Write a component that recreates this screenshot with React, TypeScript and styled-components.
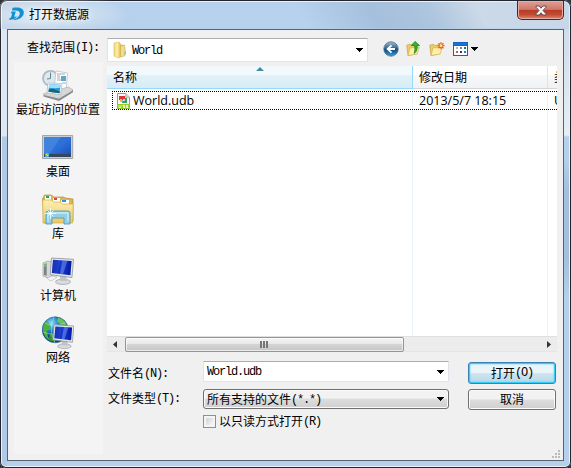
import React from "react";
import styled, { createGlobalStyle } from "styled-components";

const GlobalStyle = createGlobalStyle`
  * { box-sizing: border-box; }
  body { margin: 0; background: #30333a; overflow: hidden; }
`;

const sans = `"Open Sans", "Noto Sans CJK SC", sans-serif`;

const Window = styled.div`
  width: 571px;
  height: 468px;
  display: flex;
  flex-direction: column;
  border-radius: 7px 7px 6px 6px;
  overflow: hidden;
  color: #000;
  font: 12px/16px ${sans};
  white-space: nowrap;
  box-shadow: inset 0 0 0 1px #24262e, inset 0 0 0 2px #e8f1fb;
  background:
    linear-gradient(to bottom, #dce7f3 0 107px, #b0c9e6 108px 100%) left 29px / 7px 439px no-repeat,
    linear-gradient(to bottom, #cfdcea 0, #e6eef6 106px, #b5d0ec 108px 130px, #a5c0de 160px 230px, #b5d0ec 270px 100%) right 29px / 7px 439px no-repeat,
    linear-gradient(to bottom, transparent 28px, #b5d0ec 29px),
    linear-gradient(62deg, #dfe8f2 0, #ccdaeb 14%, #bccfe5 25%, #a9c5e1 36%, #b6d1ec 43%, #b7d2ec 66%, #a5c0dc 75%, #adc5de 82%, #cbd9e8 88%, #c6d7e9 100%);
`;

const TitleBar = styled.header`
  height: 29px;
  flex: none;
  display: flex;
  align-items: flex-start;
  padding: 1px 7px 0 9px;
  background: radial-gradient(ellipse 85px 24px at 45px 15px, rgba(255,255,255,.75), transparent);
`;

const TitleLogo = styled.span`
  padding-top: 6px;
  line-height: 0;
`;

const TitleText = styled.h1`
  margin: 5px 0 0 5px;
  flex: 1;
  font: 12px/18px ${sans};
  text-shadow: 0 0 6px #fff;
`;

const CloseButton = styled.button`
  width: 47px;
  height: 19px;
  padding: 0;
  display: flex;
  justify-content: center;
  align-items: center;
  border: 1px solid #591f20;
  border-top: 0;
  border-radius: 0 0 5px 5px;
  box-shadow: inset 0 0 0 1px #e9aaa0;
  background: linear-gradient(#dca197 0, #cf7768 47%, #b73b28 50%, #c14b32 75%, #dc8869 100%);
`;

const Client = styled.main`
  margin: 0 7px 7px;
  height: 432px;
  border: 1px solid #58636e;
  background: #f0f0f0;
  display: grid;
  grid-template-columns: 99px 450px;
`;

const Left = styled.section`
  display: flex;
  flex-direction: column;
`;

const Label = styled.label`
  font: 12px/16px "Noto Sans CJK SC", sans-serif;
  display: flex;
  align-items: center;
`;

const LookIn = styled(Label)`
  height: 32px;
  padding: 2px 0 0 19px;
`;

const FieldLabel = styled(Label)<{ $lift: number }>`
  padding-bottom: ${(p) => p.$lift}px;
`;

const Latin = styled.span`
  padding-top: 1px;
  font: 12px/16px "Liberation Mono", monospace;
  letter-spacing: -1.2px;
`;

const Places = styled.nav`
  margin-left: 6px;
  width: 89px;
  height: 392px;
  padding: 6px 1px 0 0;
  background: #f4f4f4;
`;

const Place = styled.a`
  height: 62px;
  display: flex;
  flex-direction: column;
  align-items: center;
  svg { display: block; flex: none; }
`;

const PlaceName = styled.span`
  height: 17px;
  line-height: 17px;
  margin-top: -1px;
`;

const Right = styled.section`
  display: flex;
  flex-direction: column;
`;

const Toolbar = styled.div`
  height: 36px;
  padding-top: 8px;
  display: flex;
`;

const Combo = styled.div<{ $w: number; $h: number; $button?: boolean }>`
  width: ${(p) => p.$w}px;
  height: ${(p) => p.$h}px;
  flex: none;
  display: flex;
  align-items: center;
  padding: 0 4px 0 3px;
  border: 1px solid ${(p) => (p.$button ? "#707070" : "#e2e3ea")};
  border-top-color: ${(p) => (p.$button ? "#707070" : "#abadb3")};
  border-radius: ${(p) => (p.$button ? 3 : 1)}px;
  background: ${(p) => (p.$button ? "linear-gradient(#f2f2f2 0 45%, #dddddd 50%, #cfcfcf)" : "#fff")};
  box-shadow: ${(p) => (p.$button ? "inset 0 0 0 1px #fafafa" : "none")};
`;

const ComboText = styled.span`
  flex: 1;
  display: flex;
  align-items: center;
  font-family: "Noto Sans CJK SC", sans-serif;
`;

const LocationIcon = styled.span`
  display: flex;
  margin: 0 4px 0 1px;
`;

const Tools = styled.div`
  display: flex;
  align-items: flex-start;
  padding: 3px 0 0 15px;
  gap: 7px;
  svg { display: block; }
`;

const ViewTool = styled.span`
  display: flex;
  align-items: center;
  gap: 3px;
  padding: 1px 0 0 1px;
`;

const List = styled.div`
  height: 270px;
  flex: none;
  display: grid;
  grid-template-columns: 306px 135px 9px;
  grid-template-rows: 23px 2px 19px 226px;
  background:
    linear-gradient(#e8f2fc, #e8f2fc) 305px 0 / 1px 100% no-repeat,
    linear-gradient(#e8f2fc, #e8f2fc) 440px 0 / 1px 100% no-repeat, #fff;
`;

const HeaderCell = styled.div<{ $sorted?: boolean }>`
  position: relative;
  padding: 3px 0 0 6px;
  overflow: hidden;
  line-height: 17px;
  border-right: 1px solid ${(p) => (p.$sorted ? "#96d9f9" : "#dfe3e8")};
  border-bottom: 1px solid ${(p) => (p.$sorted ? "#96d9f9" : "#d5d5d5")};
  background: ${(p) => (p.$sorted ? "linear-gradient(#f2f9fc 0 9px, #e1f1f9 9px, #d8ecf6)" : "linear-gradient(#fff 0 9px, #f7f8fa 9px, #f1f2f4)")};
  &:nth-child(3) { border-right: 0; }
`;

const SortMark = styled.svg`
  position: absolute;
  left: 149px;
  top: 1px;
`;

const FileRow = styled.div`
  grid-row: 3;
  grid-column: 1 / -1;
  height: 19px;
  margin-left: 5px;
  display: grid;
  grid-template-columns: 301px 135px 9px;
  align-items: center;
  background:
    repeating-linear-gradient(90deg, #000 0 1px, transparent 1px 2px) top / 100% 1px no-repeat,
    repeating-linear-gradient(90deg, #000 0 1px, transparent 1px 2px) bottom / 100% 1px no-repeat,
    repeating-linear-gradient(#000 0 1px, transparent 1px 2px) left / 1px 100% no-repeat;
`;

const FileCell = styled.div`
  display: flex;
  align-items: center;
  gap: 3px;
  overflow: hidden;
  padding-left: 6px;
  font-size: 12.5px;
  &:first-child { padding-left: 5px; }
`;

const ScrollBar = styled.div`
  height: 16px;
  flex: none;
  display: flex;
  align-items: center;
  justify-content: space-between;
  padding: 0 6px;
  background: #ececec;
  border-top: 1px solid #e0e0e0;
  border-bottom: 1px solid #e5e5e5;
  svg { flex: none; }
`;

const Thumb = styled.div`
  width: 279px;
  height: 15px;
  margin: 0 auto 0 8px;
  display: flex;
  justify-content: center;
  align-items: center;
  border: 1px solid #959595;
  border-radius: 2px;
  background: linear-gradient(#f5f5f5 0, #e8e8ea 46%, #d4d4d6 50%, #c6c6c8);
  box-shadow: inset 0 0 0 1px rgba(255,255,255,.6);
`;

const Form = styled.form`
  padding: 9px 1px 0 1px;
  display: grid;
  grid-template-columns: 95px 265px 88px;
  grid-template-rows: 28px 26px 20px;
`;

const Button = styled.button<{ $primary?: boolean }>`
  width: 88px;
  height: ${(p) => (p.$primary ? 22 : 21)}px;
  margin: ${(p) => (p.$primary ? 1 : 0)}px 0 0;
  padding: 0 0 1px;
  display: flex;
  justify-content: center;
  align-items: center;
  font: 12px/16px "Noto Sans CJK SC", sans-serif;
  color: #000;
  border: 1px solid ${(p) => (p.$primary ? "#3c7fb1" : "#707070")};
  border-radius: 3px;
  box-shadow: ${(p) => (p.$primary ? "inset 0 0 0 1px #34cdf8, inset 0 0 2px 1px #48d8fb" : "inset 0 0 0 1px #fbfbfb")};
  background: ${(p) => (p.$primary ? "linear-gradient(#eaf4f9 0 48%, #cfe5f1 52%, #b8d8e8)" : "linear-gradient(#f2f2f2 0 48%, #dddddd 52%, #cfcfcf)")};
`;

const CheckRow = styled(Label)`
  grid-column: 2;
  height: 16px;
  margin-top: -2px;
`;

const CheckBox = styled.span`
  width: 13px;
  height: 13px;
  margin-right: 3px;
  border: 1px solid #8e8f8f;
  background: linear-gradient(135deg, #cfd4d9, #f6f6f6) content-box, #f4f4f4;
  padding: 2px;
`;

const Grip = styled.svg`
  position: absolute;
  left: 552px;
  top: 450px;
`;

const Gradients = styled.svg`
  position: absolute;
  width: 0;
  height: 0;
`;

const Arrow = () => (
  <svg width="7" height="4" shapeRendering="crispEdges"><path d="M0 0h7v1H6v1H5v1H4v1H3V3H2V2H1V1H0z" /></svg>
);

const Logo = () => (
  <svg width="15" height="14" viewBox="0 0 15 14">
    <path d="M3.6.8C10.5-.6 15.2 1.6 14.8 6 14.4 10.6 9 13.4 3.6 13c4-1.300 7-3.400 7.200-6.700C10.900 4 8.800 3.300 3 3.400z" fill="#1191d2" />
    <path d="M2.500 4.600h4.300L5.200 9.800c1 .1 1.800-.1 2.800-.8-1.200 2.700-3.600 4-8 3.800l.6-1.900c.9 0 1.300-.3 1.600-1.200l1-3.200H2z" fill="#1191d2" />
  </svg>
);

const FolderIcon = () => (
  <svg width="16" height="18" viewBox="0 0 16 18">
    <defs><linearGradient id="fold"><stop stopColor="#efd777" /><stop offset=".5" stopColor="#fff0a9" /><stop offset="1" stopColor="#d9b84c" /></linearGradient></defs>
    <path d="M5 3l7 1v10l-5 1z" fill="#d9bd5a" />
    <path d="M2 2l5-1 1.500 2v13l-2 1-4.500-2z" fill="url(#fold)" stroke="#d9bd60" strokeWidth=".6" />
    <path d="M8.500 5l4-1 1 8-1 3-4 1z" fill="#f3dc86" stroke="#cdac4b" strokeWidth=".6" />
    <path d="M13 10.500v3.200" stroke="#62aee0" />
  </svg>
);

const BackIcon = () => (
  <svg width="16" height="16" viewBox="0 0 16 16">
    <defs><linearGradient id="back" x2="0" y2="1"><stop stopColor="#a8bdcd" /><stop offset=".45" stopColor="#2c6695" /><stop offset=".55" stopColor="#114a80" /><stop offset="1" stopColor="#35a5e2" /></linearGradient></defs>
    <circle cx="8" cy="8" r="7.2" fill="url(#back)" stroke="#4d6f89" strokeWidth=".8" />
    <path d="M8.500 4.300L4.600 8l3.900 3.700M4.800 8H12" fill="none" stroke="#fff" strokeWidth="1.8" />
  </svg>
);

const OpenFolder = () => (
  <>
    <path d="M.7 4.200l4-.9 1 1.200 5-.7v8.700L2 14.600z" fill="#eccb67" stroke="#c9a441" strokeWidth=".7" />
    <path d="M2 14.600L4 7l9.300-1-2.200 7z" fill="#fff0a6" stroke="#d3b24f" strokeWidth=".7" />
  </>
);

const UpIcon = () => (
  <svg width="16" height="16" viewBox="0 0 16 16">
    <OpenFolder />
    <path d="M9 .5l4.500 4h-2.400c.4 3.700-.4 6.500-3 7.900 1-2.600 1-5 .5-7.900H5.300z" fill="#37b529" stroke="#16801b" strokeWidth=".8" />
  </svg>
);

const NewFolderIcon = () => (
  <svg width="16" height="16" viewBox="0 0 16 16">
    <OpenFolder />
    <path d="M12 1.200v7M8.500 4.700h7M9.500 2.200l5 5M14.500 2.200l-5 5" stroke="#ef5a27" strokeWidth="1.3" />
    <circle cx="12" cy="4.700" r="1.4" fill="#fff07a" />
  </svg>
);

const ViewIcon = () => (
  <svg width="15" height="14" shapeRendering="crispEdges">
    <path fill="#1760c4" d="M0 0h15v14H0z" /><path fill="#1674dc" d="M1 1h13v2H1z" /><path fill="#fff" d="M1 4h13v9H1z" />
    <path fill="#b0b8c2" d="M3 5h2v2H3z" /><path fill="#78849a" d="M7 5h2v2H7z" /><path fill="#168849" d="M11 5h2v2h-2z" />
    <path fill="#e2551e" d="M3 9h2v2H3z" /><path fill="#213c79" d="M7 9h2v2H7z" /><path fill="#2771dd" d="M11 9h2v2h-2z" />
  </svg>
);

const FileIcon = () => (
  <svg width="13" height="16" viewBox="0 0 13 16">
    <path d="M.5.5h8.300l3.700 3.700v11.300H.5z" fill="#fafafa" stroke="#969696" />
    <path d="M8.800.5v3.700h3.700" fill="#ddd" stroke="#aaa" />
    <path d="M2 3h5v4H2z" fill="#e03331" /><path d="M6 5h4v5H5z" fill="#3a9c56" /><path d="M5 3h3v4H5z" fill="#e03331" /><path d="M6 6h2v2H6z" fill="#b6e2e6" /><path d="M3 6h2v3H3z" fill="#f4ba42" />
    <path d="M0 11h13v5H0z" fill="#8cc71d" />
    <path d="M2 12v2.500h2V12M8 12.300H6v1h2v1.200H6M11.500 12.300h-2v2.200h2M9.500 13.400h1.500" stroke="#fff" strokeWidth=".8" fill="none" />
  </svg>
);

const Monitor = () => (
  <>
    <ellipse cx="21" cy="25.800" rx="7.5" ry="2.6" fill="#dadddf" stroke="#959b9f" strokeWidth=".7" />
    <path d="M18 20h6l1 5h-7z" fill="#bfc4c8" />
    <path d="M9.500 2l22 1.300-1.600 18.200L8.200 18.700z" fill="#e6e9e8" stroke="#888f94" strokeWidth=".8" />
    <path d="M11 3.800l18.600 1.100-1.200 14.400L9.800 17z" fill="url(#screen)" />
    <path d="M11 3.800l7.500.5-2.700 13.300-6-.7z" fill="#76a2ff" opacity=".12" />
    <path d="M20.500 4.400l5 .3-4.500 13.600-3-.5z" fill="#9bb9ff" opacity=".4" />
  </>
);

const RecentIcon = () => (
  <svg width="32" height="34" viewBox="0 0 32 34">
    <circle cx="8.5" cy="10.300" r="7.5" fill="#dce9ef" stroke="#aebbc2" strokeWidth="1.8" />
    <path d="M8.500 4.500v6L5 11" fill="none" stroke="#698491" />
    <path d="M14 3l11.500 2L24 24l-12-2z" fill="#fff" stroke="#bec3c6" strokeWidth=".8" />
    <path d="M15 6h8M15 8h3M15 10h3M15 12h4M20 15h4" stroke="#91989c" strokeWidth=".8" />
    <path d="M19 8h5v5h-5z" fill="#63a5c9" />
    <path d="M1.500 26l5-2 20-5 4.500 3L17 31z" fill="#d5d7d8" stroke="#a5a9ac" strokeWidth=".6" />
    <path d="M6 15l14 .6-1.500 11L5 24.800z" fill="#fff" stroke="#a5adb2" strokeWidth=".6" />
    <path d="M7.200 16.200l11.500.5-1.300 8.500-11-1.400z" fill="#2e96dc" />
    <path d="M7.200 16.200l11.500.5-.5 3-5.200.6-6.300-.6z" fill="#9de0fc" />
    <path d="M6.800 21.500l4.200-.8 7 2.700-.5 1.800-11-1.400z" fill="#146b6a" />
    <path d="M1.500 26L17 29.700 31 21.500v2.800L17 33 1.500 28.600z" fill="#888c8e" />
    <path d="M2 26.500l15 3.600 13.500-8" fill="none" stroke="#ededed" strokeWidth=".8" />
  </svg>
);

const DesktopIcon = () => (
  <svg width="32" height="34" viewBox="0 0 32 34">
    <path d="M.5 5.500h30.200v23H.5z" fill="#cbd0d4" stroke="#a0a6ac" />
    <path d="M2 7h27v20H2z" fill="url(#desk)" />
    <path d="M2 7h17L8 23H2z" fill="#69a4ef" opacity=".32" />
    <path d="M2 24h27v3H2z" fill="#36465a" /><circle cx="5" cy="25" r="2.2" fill="#3dc6de" />
    <path d="M4 24l1 1M6 25l-1 1" stroke="#d1e54d" />
  </svg>
);

const LibraryIcon = () => (
  <svg width="32" height="34" viewBox="0 0 32 34">
    <path d="M.5 7l2-4h7l2 2h10l2 1 7.500 1v22L2 31z" fill="#d9b652" stroke="#b78f35" strokeWidth=".7" />
    <path d="M3 4h6v4H3z" fill="#fff" /><path d="M4 4h3v2H4z" fill="#26aa4a" />
    <path d="M11 6h7v4h-7z" fill="#fff" /><path d="M12 6h3v2h-3z" fill="#d64a34" />
    <path d="M19 8h8v4h-8z" fill="#fff" /><path d="M20 8h4v2h-4z" fill="#2e93df" />
    <path d="M.7 8h8.800l2 2h7l2 2h10.800l-.6 19H1z" fill="url(#library)" stroke="#d0ad4c" strokeWidth=".7" />
    <path d="M4 32V21q0-2 2-2h20q2 0 2 2v11h-6v-6H10v6z" fill="#92cfe6" stroke="#3f98bd" strokeWidth=".8" />
    <path d="M6 30v-9h20v8" fill="none" stroke="#dcf6ff" strokeWidth="1.3" opacity=".75" />
    <path d="M8.500 16v11M3 21.500h11M5.500 18.500l6 6M11.500 18.500l-6 6" stroke="#fff" strokeWidth=".8" />
  </svg>
);

const ComputerIcon = () => (
  <svg width="32" height="34" viewBox="0 0 32 34">
    <g transform="translate(0 2)">
      <path d="M1 7l5-2 5 1v13l-5 3-5-2z" fill="#d5d8d8" stroke="#999d9e" strokeWidth=".7" />
      <path d="M2 8l2.700-.7v12.500L2 19z" fill="#7d8384" /><circle cx="3.3" cy="9.500" r="1.2" fill="#52e452" />
      <path d="M5 22l5-2 5 1-4 3-3 1z" fill="#f2f3f2" stroke="#b2b5b6" strokeWidth=".6" />
      <Monitor />
    </g>
  </svg>
);

const NetworkIcon = () => (
  <svg width="32" height="34" viewBox="0 0 32 34">
    <circle cx="13.2" cy="13.800" r="13" fill="url(#globe)" stroke="#246389" strokeWidth=".6" />
    <path d="M1 12Q2 7 5 5l3 4 1 3-4 3 1 6 3 4Q1 22 1 12z" fill="#4bb242" />
    <path d="M16 1.500q7 2 9 8l-6-1-4-3z" fill="#64c35a" /><path d="M8 17l6 3-1 6-6-2z" fill="#389637" />
    <path d="M3 7q8 5 20 0M1 16q10 4 20 1M12 1Q6 14 13 27" fill="none" stroke="#c0edf4" strokeWidth=".7" opacity=".65" />
    <g transform="translate(3.5 7) scale(.9)"><Monitor /></g>
  </svg>
);

const places = [
  ["最近访问的位置", RecentIcon], ["桌面", DesktopIcon], ["库", LibraryIcon], ["计算机", ComputerIcon], ["网络", NetworkIcon],
] as const;

export default function App() {
  return (
    <>
      <GlobalStyle />
      <Gradients><defs>
        <linearGradient id="screen"><stop stopColor="#0820a8" /><stop offset=".5" stopColor="#1739d0" /><stop offset="1" stopColor="#0417a0" /></linearGradient>
        <linearGradient id="desk" x2="1" y2="1"><stop stopColor="#3476c9" /><stop offset=".5" stopColor="#2c70dd" /><stop offset="1" stopColor="#174eae" /></linearGradient>
        <linearGradient id="library" x2="0" y2="1"><stop stopColor="#fff0b3" /><stop offset="1" stopColor="#e7c867" /></linearGradient>
        <radialGradient id="globe" cx=".35" cy=".25"><stop stopColor="#8de1f5" /><stop offset=".55" stopColor="#2784c9" /><stop offset="1" stopColor="#104784" /></radialGradient>
      </defs></Gradients>
      <Window>
        <TitleBar>
          <TitleLogo><Logo /></TitleLogo>
          <TitleText>打开数据源</TitleText>
          <CloseButton aria-label="关闭">
            <svg width="12" height="11" viewBox="0 0 12 11"><path d="M1 1h3.200L6 3.200 7.800 1H11v1.200L8 5.500l3 3.300V10H7.800L6 7.800 4.200 10H1V8.800l3-3.300-3-3.300z" fill="#f7f5f5" stroke="#5b4547" strokeWidth=".9" /></svg>
          </CloseButton>
        </TitleBar>
        <Client>
          <Left>
            <LookIn>查找范围<Latin>(I):</Latin></LookIn>
            <Places>
              {places.map(([name, Icon]) => <Place key={name}><Icon /><PlaceName>{name}</PlaceName></Place>)}
            </Places>
          </Left>
          <Right>
            <Toolbar>
              <Combo $w={261} $h={24}><LocationIcon><FolderIcon /></LocationIcon><ComboText><Latin>World</Latin></ComboText><Arrow /></Combo>
              <Tools><BackIcon /><UpIcon /><NewFolderIcon /><ViewTool><ViewIcon /><Arrow /></ViewTool></Tools>
            </Toolbar>
            <List>
              <HeaderCell $sorted>名称<SortMark width="8" height="5"><path d="M4 0l4 4H0z" fill="#458aa9" /></SortMark></HeaderCell>
              <HeaderCell>修改日期</HeaderCell>
              <HeaderCell>类型</HeaderCell>
              <FileRow>
                <FileCell><FileIcon />World.udb</FileCell>
                <FileCell>2013/5/7 18:15</FileCell>
                <FileCell>UDB 文件</FileCell>
              </FileRow>
            </List>
            <ScrollBar>
              <svg width="4" height="7"><path d="M4 0v7L0 3.500z" fill="#333" /></svg>
              <Thumb><svg width="9" height="7" shapeRendering="crispEdges"><path d="M0 0h2v7H0zM3 0h2v7H3zM6 0h2v7H6z" fill="#777" /></svg></Thumb>
              <svg width="4" height="7"><path d="M0 0v7l4-3.500z" fill="#333" /></svg>
            </ScrollBar>
            <Form>
              <FieldLabel $lift={4}>文件名<Latin>(N):</Latin></FieldLabel>
              <Combo $w={246} $h={21}><ComboText><Latin>World.udb</Latin></ComboText><Arrow /></Combo>
              <Button type="button" $primary>打开<Latin>(O)</Latin></Button>
              <FieldLabel $lift={8}>文件类型<Latin>(T):</Latin></FieldLabel>
              <Combo $w={246} $h={20} $button><ComboText>所有支持的文件<Latin>(*.*)</Latin></ComboText><Arrow /></Combo>
              <Button type="button">取消</Button>
              <CheckRow><CheckBox />以只读方式打开<Latin>(R)</Latin></CheckRow>
            </Form>
          </Right>
        </Client>
      </Window>
      <Grip width="9" height="9" shapeRendering="crispEdges"><path d="M6 0h2v2H6zM3 3h2v2H3zM6 3h2v2H6zM0 6h2v2H0zM3 6h2v2H3zM6 6h2v2H6z" fill="#bcbcbc" /></Grip>
    </>
  );
}
